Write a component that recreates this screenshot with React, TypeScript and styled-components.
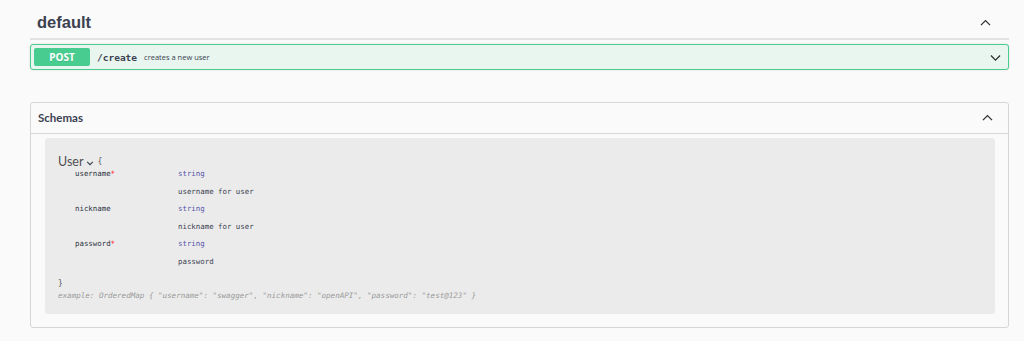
import React from 'react'
import styled, { createGlobalStyle } from 'styled-components'

const GlobalStyle = createGlobalStyle`
    html, body {
        margin: 0;
        padding: 0;
        background: #fafafa;
        font-family: "Liberation Sans", Arial, sans-serif;
        color: #3b4151;
    }
`

const Page = styled.div`
    padding: 0 15px 0 30px;
    width: 979px;
`
const TagHeader = styled.div`
    display: flex;
    align-items: center;
    justify-content: space-between;
    height: 32px;
    padding: 6px 17px 0 7px;
    border-bottom: 2px solid #e2e2e2;
`
const TagTitle = styled.h3`
    margin: 0;
    font-size: 16.5px;
    font-weight: 700;
    color: #3b4151;
`
const OpBlock = styled.div`
    display: flex;
    align-items: center;
    margin-top: 4px;
    height: 24px;
    padding: 0 6px 0 3px;
    border: 1px solid #49cc90;
    border-radius: 3px;
    background: #e8f6ef;
    box-shadow: 0 0 2px rgba(0, 0, 0, 0.15);
`
const MethodBadge = styled.span`
    display: flex;
    align-items: center;
    justify-content: center;
    width: 56px;
    height: 18px;
    border-radius: 2px;
    background: #49cc90;
    color: #fff;
    font-family: "Open Sans", sans-serif;
    font-weight: 700;
    font-size: 10px;
    text-shadow: 0 1px 0 rgba(0, 0, 0, 0.1);
`
const OpPath = styled.span`
    margin-left: 7px;
    font-family: "DejaVu Sans Mono", monospace;
    font-weight: 700;
    font-size: 9.5px;
    color: #3b4151;
`
const OpSummary = styled.span`
    flex: 1;
    margin-left: 7px;
    font-family: "Open Sans", sans-serif;
    font-size: 7.5px;
    color: #3b4151;
`
const Models = styled.section`
    margin-top: 32px;
    border: 1px solid #d6d6d6;
    border-radius: 3px;
    height: 224px;
    display: flex;
    flex-direction: column;
`
const ModelsHeader = styled.div`
    display: flex;
    align-items: center;
    justify-content: space-between;
    height: 31px;
    padding: 0 14px 2px 7px;
    box-sizing: border-box;
    border-bottom: 1px solid #d6d6d6;
`
const ModelsTitle = styled.h4`
    margin: 0;
    font-family: "Lato", sans-serif;
    font-size: 11.5px;
    font-weight: 700;
    color: #3b4151;
`
const ModelBox = styled.div`
    margin: 4px 13px 0 14px;
    height: 176px;
    border-radius: 3px;
    background: #ebebeb;
    padding: 17px 13px 0 13px;
    box-sizing: border-box;
`
const ModelName = styled.div`
    display: flex;
    align-items: center;
    gap: 3px;
    font-family: "Lato", sans-serif;
    font-size: 12.5px;
    color: #505050;
    line-height: 14px;
`
const Brace = styled.span`
    font-family: "DejaVu Sans Mono", monospace;
    font-size: 8px;
    color: #555;
    line-height: 14px;
`
const PropTable = styled.div`
    display: grid;
    grid-template-columns: 103px 1fr;
    padding-left: 17px;
    margin-top: -4px;
`
const Cell = styled.div<{ $kind?: 'name' | 'type' | 'desc' }>`
    font-family: "DejaVu Sans Mono", monospace;
    font-size: 7.4px;
    line-height: 17.5px;
    color: ${(p) => (p.$kind === 'type' ? '#55a' : p.$kind === 'name' ? '#2b3141' : '#3b4151')};
`
const Star = styled.span`
    color: #f00;
`
const Closing = styled.div`
    margin-top: 8px;
    font-family: "DejaVu Sans Mono", monospace;
    font-size: 8px;
    color: #555;
    line-height: 12px;
`
const Example = styled.div`
    font-family: "DejaVu Sans Mono", monospace;
    font-style: italic;
    font-size: 7.55px;
    color: #999;
    line-height: 12px;
`
const SmallChevron = styled.svg`
    width: 8px;
    height: 8px;
    margin-top: 2px;
`

const Chevron = ({ up, size = 13 }: { up?: boolean; size?: number }) => (
    <svg width={size} height={size} viewBox="0 0 20 20" fill="none" stroke="#303030" strokeWidth="2">
        {up ? <path d="M3 14l7-7 7 7" /> : <path d="M3 7l7 7 7-7" />}
    </svg>
)

const props = [
    { name: 'username', required: true, desc: 'username for user' },
    { name: 'nickname', required: false, desc: 'nickname for user' },
    { name: 'password', required: true, desc: 'password' },
]

const App = () => {
    return (
        <>
            <GlobalStyle />
            <Page>
                <TagHeader>
                    <TagTitle>default</TagTitle>
                    <Chevron up />
                </TagHeader>
                <OpBlock>
                    <MethodBadge>POST</MethodBadge>
                    <OpPath>/create</OpPath>
                    <OpSummary>creates a new user</OpSummary>
                    <Chevron />
                </OpBlock>
                <Models>
                    <ModelsHeader>
                        <ModelsTitle>Schemas</ModelsTitle>
                        <Chevron up />
                    </ModelsHeader>
                    <ModelBox>
                        <ModelName>
                            User
                            <SmallChevron viewBox="0 0 20 20">
                                <path d="M3 7l7 7 7-7" fill="none" stroke="#3b4151" strokeWidth="3" />
                            </SmallChevron>
                            <Brace>{'{'}</Brace>
                        </ModelName>
                        <PropTable>
                            {props.map((p) => (
                                <React.Fragment key={p.name}>
                                    <Cell $kind="name">
                                        {p.name}
                                        {p.required && <Star>*</Star>}
                                    </Cell>
                                    <Cell $kind="type">string</Cell>
                                    <Cell />
                                    <Cell $kind="desc">{p.desc}</Cell>
                                </React.Fragment>
                            ))}
                        </PropTable>
                        <Closing>{'}'}</Closing>
                        <Example>
                            example: OrderedMap {'{'} "username": "swagger", "nickname": "openAPI", "password": "test@123" {'}'}
                        </Example>
                    </ModelBox>
                </Models>
            </Page>
        </>
    )
}

export default App
